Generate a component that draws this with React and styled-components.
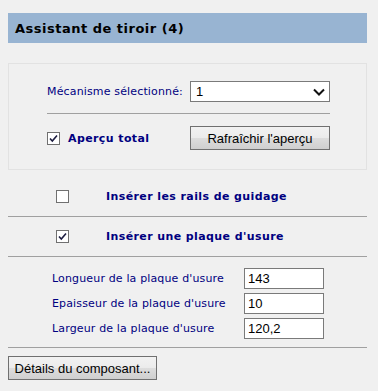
import React from "react";
import styled, { createGlobalStyle } from "styled-components";

const GlobalStyle = createGlobalStyle`
  html, body {
    margin: 0;
    padding: 0;
    background: #f0f0f0;
  }
  body {
    font-family: "DejaVu Sans", Verdana, sans-serif;
    font-size: 11px;
  }
`;

const navy = "#000080";

const Page = styled.div`
  width: 359px;
  padding: 13px 0 0 8px;
  display: flex;
  flex-direction: column;
`;

const Header = styled.div`
  height: 30px;
  background: #98b4d2;
  display: flex;
  align-items: center;
  padding-left: 7px;
  font-weight: bold;
  font-size: 13px;
  letter-spacing: 0.5px;
  color: #000;
`;

const Panel = styled.div`
  margin-top: 20px;
  height: 105px;
  border: 1px solid #e2e2e2;
  display: flex;
  flex-direction: column;
  padding: 0 36px 0 38px;
`;

const PanelRow = styled.div`
  display: flex;
  align-items: center;
  justify-content: space-between;
  height: ${(p) => p.h}px;
  margin-top: ${(p) => p.mt || 0}px;
`;

const Label = styled.span`
  color: ${navy};
  font-weight: ${(p) => (p.bold ? "bold" : "normal")};
  letter-spacing: ${(p) => (p.bold ? "0.4px" : "0.15px")};
  white-space: nowrap;
`;

const SelectBox = styled.div`
  height: 19px;
  border: 1px solid #7a7a7a;
  background: #fff;
  display: flex;
  align-items: center;
  justify-content: space-between;
  padding: 0 4px 0 5px;
  width: 129px;
  font-family: "Liberation Sans", Arial, sans-serif;
  font-size: 13px;
`;

const Rule = styled.div`
  height: 1px;
  background: #a0a0a0;
  margin-top: ${(p) => p.mt || 0}px;
`;

const Button = styled.button`
  height: 24px;
  width: ${(p) => p.w}px;
  border: 1px solid #707070;
  border-radius: 0;
  background: linear-gradient(#f2f2f2 0%, #ebebeb 50%, #dddddd 51%, #cfcfcf 100%);
  font-family: "Liberation Sans", Arial, sans-serif;
  font-size: 13px;
  color: #000;
  padding: 0;
  margin: 0;
`;

const CheckLabel = styled.label`
  display: flex;
  align-items: center;
  gap: ${(p) => p.gap}px;
`;

const Box = styled.span`
  width: 11px;
  height: 11px;
  border: 1px solid #707070;
  background: #fff;
  display: inline-flex;
  align-items: center;
  justify-content: center;
  flex-shrink: 0;
`;

const OptionRow = styled.div`
  box-sizing: border-box;
  height: ${(p) => p.h}px;
  padding-top: ${(p) => p.pt || 0}px;
  display: flex;
  align-items: center;
  padding-left: 48px;
`;

const Fields = styled.div`
  display: flex;
  flex-direction: column;
  gap: 3px;
  padding: 10px 0 0 44px;
`;

const FieldRow = styled.div`
  display: grid;
  grid-template-columns: 192px 80px;
  align-items: center;
  height: 22px;
`;

const Input = styled.div`
  height: 19px;
  border: 1px solid #7a7a7a;
  background: #fff;
  display: flex;
  align-items: center;
  padding-left: 3px;
  font-family: "Liberation Sans", Arial, sans-serif;
  font-size: 13px;
`;

const Footer = styled.div`
  padding-top: 8px;
`;

function Check({ checked }) {
  return (
    <Box>
      {checked && (
        <svg width="9" height="9" viewBox="0 0 9 9">
          <path d="M1 4.5 L3.3 7 L8 1.5" fill="none" stroke="#1c1c40" strokeWidth="1.6" />
        </svg>
      )}
    </Box>
  );
}

function Chevron() {
  return (
    <svg width="12" height="8" viewBox="0 0 12 8">
      <path d="M1 1.5 L6 6.5 L11 1.5" fill="none" stroke="#111" strokeWidth="2" />
    </svg>
  );
}

const fields = [
  ["Longueur de la plaque d'usure", "143"],
  ["Epaisseur de la plaque d'usure", "10"],
  ["Largeur de la plaque d'usure", "120,2"],
];

export default function App() {
  return (
    <>
      <GlobalStyle />
      <Page>
        <Header>Assistant de tiroir (4)</Header>
        <Panel>
          <PanelRow h={21} mt={17}>
            <Label>Mécanisme sélectionné:</Label>
            <SelectBox>
              <span>1</span>
              <Chevron />
            </SelectBox>
          </PanelRow>
          <Rule mt={11} />
          <PanelRow h={24} mt={12}>
            <CheckLabel gap={8}>
              <Check checked />
              <Label bold>Aperçu total</Label>
            </CheckLabel>
            <Button w={140}>Rafraîchir l'aperçu</Button>
          </PanelRow>
        </Panel>
        <OptionRow h={46} pt={6}>
          <CheckLabel gap={37}>
            <Check />
            <Label bold>Insérer les rails de guidage</Label>
          </CheckLabel>
        </OptionRow>
        <Rule />
        <OptionRow h={39}>
          <CheckLabel gap={37}>
            <Check checked />
            <Label bold>Insérer une plaque d'usure</Label>
          </CheckLabel>
        </OptionRow>
        <Rule />
        <Fields>
          {fields.map(([label, value]) => (
            <FieldRow key={label}>
              <Label>{label}</Label>
              <Input>{value}</Input>
            </FieldRow>
          ))}
        </Fields>
        <Rule mt={8} />
        <Footer>
          <Button w={149}>Détails du composant...</Button>
        </Footer>
      </Page>
    </>
  );
}
